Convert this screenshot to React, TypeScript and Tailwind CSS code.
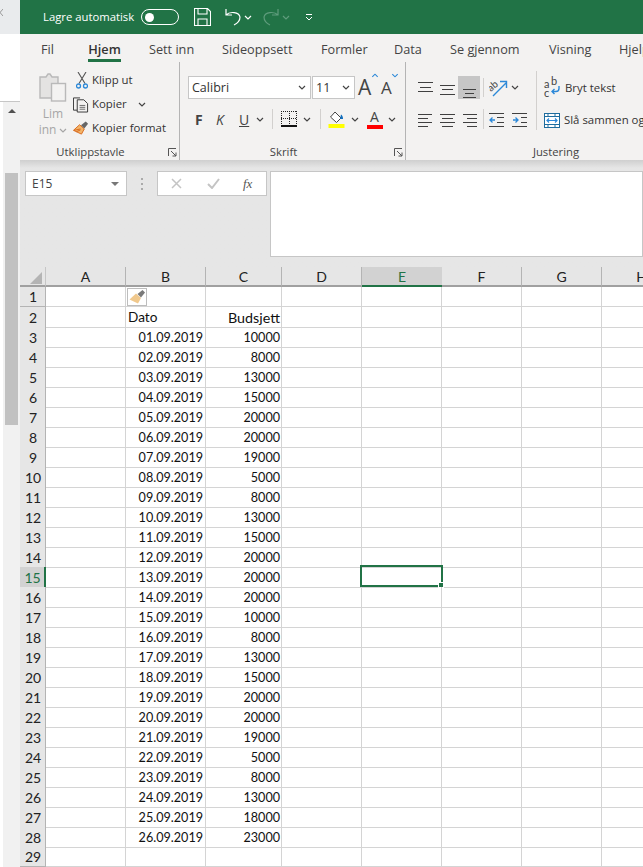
import type { ReactNode } from 'react';

const budgets = [
  10000, 8000, 13000, 15000, 20000, 20000, 19000, 5000, 8000, 13000, 15000, 20000, 20000, 20000, 10000, 8000, 13000,
  15000, 20000, 20000, 19000, 5000, 8000, 13000, 18000, 23000,
];
const columns = ['A', 'B', 'C', 'D', 'E', 'F', 'G', 'H'];
const tabs = [
  { label: 'Fil', width: 'w-[47px]' },
  { label: 'Hjem', width: 'w-[61px]', active: true },
  { label: 'Sett inn', width: 'w-[73px]' },
  { label: 'Sideoppsett', width: 'w-[99px]' },
  { label: 'Formler', width: 'w-[73px]' },
  { label: 'Data', width: 'w-[56px]' },
  { label: 'Se gjennom', width: 'w-[99px]' },
  { label: 'Visning', width: 'w-[70px]' },
  { label: 'Hjelp', width: 'w-[50px]' },
];

const ui = "font-['Open_Sans','Noto_Sans',sans-serif]";
const cell = "font-['Lato','Liberation_Sans',sans-serif]";

function Chevron({ className = 'text-[#444]' }: { className?: string }) {
  return (
    <svg width="8" height="5" viewBox="0 0 8 5" className={className}>
      <path d="M1 1l3 3 3-3" fill="none" stroke="currentColor" strokeWidth="1.2" />
    </svg>
  );
}

function Launcher() {
  return (
    <svg width="9" height="9" viewBox="0 0 9 9" className="text-[#555]">
      <path d="M.5 8V.5H8M3 3l5 5M8 4.5V8H4.5" fill="none" stroke="currentColor" />
    </svg>
  );
}

/** Stack of horizontal strokes used by the alignment buttons. */
function Lines({ rows, h = 14 }: { rows: [number, number, number?][]; h?: number }) {
  return (
    <svg width="15" height={h} viewBox={`0 0 15 ${h}`} className="text-[#404040]">
      {rows.map(([y, x1, x2], i) => (
        <path key={i} d={`M${x1} ${y}.5H${x2 ?? 15 - x1}`} stroke="currentColor" />
      ))}
    </svg>
  );
}

function PasteIcon() {
  return (
    <svg width="28" height="31" viewBox="0 0 28 31">
      <path d="M1 5h6l2-3h2l2 3h6v21H1z" fill="#e4e3e2" stroke="#b9b9b9" strokeWidth="1.4" />
      <rect x="12.5" y="11.5" width="14" height="17.5" fill="#f3f2f1" stroke="#b9b9b9" strokeWidth="1.4" />
    </svg>
  );
}

function ScissorsIcon() {
  return (
    <svg width="12" height="17" viewBox="0 0 12 17">
      <path d="M2 0l7 11.5M10 0L3 11.5" stroke="#555" strokeWidth="1.1" fill="none" />
      <circle cx="2.5" cy="14" r="2" fill="none" stroke="#2b88d8" strokeWidth="1.3" />
      <circle cx="9.5" cy="14" r="2" fill="none" stroke="#2b88d8" strokeWidth="1.3" />
    </svg>
  );
}

function CopyIcon() {
  return (
    <svg width="17" height="17" viewBox="0 0 17 17" fill="none" stroke="#333">
      <path d="M4.5 14.5h-4v-13h7" />
      <path d="M4.5 3.5h7l4 4v9h-11z" fill="#f3f2f1" />
      <path d="M7 9.5h6M7 11.5h6M7 13.5h6" stroke="#666" />
    </svg>
  );
}

function BrushIcon({ faded = false }: { faded?: boolean }) {
  return (
    <svg width="17" height="16" viewBox="0 0 17 16">
      <path d="M7 4.5l5 4.5-3 5.5-8.5-4z" fill={faded ? '#f0c88c' : '#f2b56b'} stroke={faded ? 'none' : '#d9681a'} />
      {!faded && <path d="M1 10.5L8 9M3.500 12l4.500-2" stroke="#d9681a" fill="none" />}
      <path d="M8.500 5l5-4 2.500 2.500-4 5z" fill={faded ? '#7a7a7a' : '#666'} />
    </svg>
  );
}

function BorderIcon() {
  return (
    <svg width="16" height="16" viewBox="0 0 16 16" className="text-[#222]" shapeRendering="crispEdges">
      <path d="M0 .5h16M0 7.500h16M.5 0v15M15.500 0v15M8.500 0v15" stroke="currentColor" strokeDasharray="1 1" fill="none" />
      <path d="M0 15h16" stroke="#111" strokeWidth="1.4" />
    </svg>
  );
}

function FillIcon() {
  return (
    <svg width="17" height="17" viewBox="0 0 17 17">
      <path d="M7 1l6 6-4.500 4.500-6-5.500z" fill="#fff" stroke="#444" />
      <path d="M13 3.500c1.500 1 2 2.500 2 4.500h-3z" fill="#106ebe" />
      <rect x="0.500" y="13" width="16" height="4" fill="#ffff00" />
    </svg>
  );
}

function OrientationIcon() {
  return (
    <svg width="19" height="18" viewBox="0 0 19 18" className={cell}>
      <text x="0" y="10" fontSize="10" fill="#444" transform="rotate(-40 5 9)">ab</text>
      <path d="M4 17L17 4M11 2.500h6.500V9" fill="none" stroke="#2b88d8" strokeWidth="1.4" />
    </svg>
  );
}

function WrapArrow() {
  return (
    <svg width="11" height="11" viewBox="0 0 11 11" className="-ml-px">
      <path d="M9 1v2.500a3 3 0 0 1-3 3H2M4.500 4L2 6.500 4.500 9" fill="none" stroke="#2b88d8" strokeWidth="1.4" />
    </svg>
  );
}

function IndentIcon({ dir }: { dir: 'in' | 'out' }) {
  const arrow = dir === 'out' ? 'M6 7H1M3.500 4.500L1 7l2.500 2.500' : 'M1 7h5M3.500 4.500L6 7 3.500 9.500';
  return (
    <svg width="15" height="14" viewBox="0 0 15 14">
      <path d={arrow} fill="none" stroke="#2b88d8" strokeWidth="1.3" />
      <path d={dir === 'out' ? 'M0 .5h15M8 4.500h7M8 9.500h7M0 13.500h15' : 'M0 .5h15M9 4.500h6M9 9.500h6M0 13.500h15'} stroke="#404040" />
    </svg>
  );
}

function MergeIcon() {
  return (
    <svg width="16" height="15" viewBox="0 0 16 15">
      <rect x=".5" y=".5" width="15" height="14" fill="#fff" stroke="#1f6d9e" />
      <path d="M.5 3.500h15M.5 11.500h15M4 .5v3M11 .5v3M4 11.500v3M11 11.500v3" stroke="#1f6d9e" />
      <path d="M3 7.500h10M5 5.500l-2 2 2 2M11 5.500l2 2-2 2" fill="none" stroke="#2b88d8" strokeWidth="1.2" />
    </svg>
  );
}

function Separator({ className }: { className: string }) {
  return <div className={`w-px bg-[#d2d0ce] ${className}`} />;
}

function RibbonGroup({
  width,
  label,
  labelClass = '',
  launcher,
  border,
  children,
}: {
  width: string;
  label: string;
  labelClass?: string;
  launcher?: boolean;
  border?: boolean;
  children: ReactNode;
}) {
  return (
    <div className={`relative flex h-[98px] shrink-0 flex-col ${width} ${border ? 'border-r border-[#b4b4b4]' : ''}`}>
      <div className="h-[82px] shrink-0">{children}</div>
      <div className={`text-center text-[11.3px] leading-[16px] text-[#444] ${labelClass}`}>{label}</div>
      {launcher && (
        <div className="absolute right-[2px] bottom-[3px] flex">
          <Launcher />
        </div>
      )}
    </div>
  );
}

function ClipboardGroup() {
  return (
    <div className="flex pt-[6px]">
      <div className="mt-[4px] ml-[16px] flex w-[34px] flex-col items-center text-[12px] leading-[16px] text-[#a6a6a6]">
        <PasteIcon />
        <div className="mt-[3px]">Lim</div>
        <div className="flex items-center gap-[3px]">
          inn <Chevron className="text-[#a6a6a6]" />
        </div>
      </div>
      <div className="ml-[3px] flex flex-col text-[11.4px] text-[#333]">
        <div className="flex h-[24px] items-center gap-[4px]">
          <div className="flex w-[15px] justify-end"><ScissorsIcon /></div>
          Klipp ut
        </div>
        <div className="flex h-[24px] items-center gap-[2px]">
          <div className="flex w-[16px] justify-end"><CopyIcon /></div>
          <span className="ml-px">Kopier</span>
          <span className="ml-[9px]"><Chevron /></span>
        </div>
        <div className="flex h-[24px] items-center gap-[2px]">
          <div className="flex w-[16px] justify-end"><BrushIcon /></div>
          <span className="ml-px">Kopier format</span>
        </div>
      </div>
    </div>
  );
}

function FontGroup() {
  return (
    <div className="pt-[14px] pl-[8px]">
      <div className="flex h-[23px] items-center">
        <div className="flex h-[23px] w-[123px] items-center justify-between border border-[#c6c6c6] bg-white pr-[4px] pl-[3px] text-[12.5px] text-[#333]">
          <span className="translate-y-px">Calibri</span> <Chevron />
        </div>
        <div className="ml-px flex h-[23px] w-[43px] items-center justify-between border border-[#c6c6c6] bg-white pr-[4px] pl-[3px] text-[12.5px] text-[#333]">
          <span className="translate-y-px">11</span> <Chevron />
        </div>
        <div className="relative ml-[3px] w-[20px] text-[21px] leading-[23px] text-[#444]">
          A<span className="absolute -top-[3px] left-[13px] scale-90"><Chevron className="rotate-180 text-[#2b88d8]" /></span>
        </div>
        <div className="relative ml-[3px] w-[18px] text-[17px] leading-[23px] text-[#444]">
          A<span className="absolute -top-[3px] left-[10px] scale-90"><Chevron className="text-[#2b88d8]" /></span>
        </div>
      </div>
      <div className="mt-[8px] flex h-[24px] items-center text-[#444]">
        <span className="ml-[7px] w-[21px] text-[14px] font-bold">F</span>
        <span className="w-[23px] text-[14px] italic">K</span>
        <span className="w-[14px] text-[14px] underline">U</span>
        <span className="ml-[3px]"><Chevron /></span>
        <Separator className="mr-[8px] ml-[8px] h-[20px]" />
        <BorderIcon />
        <span className="ml-[6px]"><Chevron /></span>
        <Separator className="mr-[7px] ml-[9px] h-[20px]" />
        <FillIcon />
        <span className="ml-[6px]"><Chevron /></span>
        <span className="ml-[7px] flex w-[17px] flex-col items-center">
          <span className="h-[16px] text-[14px] leading-[16px]">A</span>
          <span className="h-[4px] w-[16px] bg-[#ff0000]" />
        </span>
        <span className="ml-[5px]"><Chevron /></span>
      </div>
    </div>
  );
}

function AlignGroup() {
  return (
    <div className="flex pt-[14px]">
      <div className="ml-[12px]">
        <div className="flex h-[23px] items-center">
          <div className="flex w-[22px]"><Lines rows={[[1, 0], [6, 2], [10, 0]]} /></div>
          <div className="flex w-[18px]"><Lines rows={[[4, 0], [8, 2], [13, 0]]} /></div>
          <div className="flex h-[23px] w-[22px] items-center justify-center bg-[#c6c6c6]"><span className="translate-y-[3px]"><Lines rows={[[5, 1], [9, 3], [13, 1]]} /></span></div>
        </div>
        <div className="mt-[10px] flex h-[22px] items-center">
          <div className="flex w-[22px]"><Lines rows={[[1, 0, 14], [5, 0, 10], [9, 0, 14], [13, 0, 10]]} /></div>
          <div className="flex w-[22px]"><Lines rows={[[1, 0], [5, 2], [9, 0], [13, 2]]} /></div>
          <div className="flex w-[18px]"><Lines rows={[[1, 1, 15], [5, 5, 15], [9, 1, 15], [13, 5, 15]]} /></div>
        </div>
      </div>
      <div className="flex flex-col">
        <Separator className="mt-[2px] ml-[3px] h-[19px]" />
        <Separator className="mt-[12px] ml-[3px] h-[20px]" />
      </div>
      <div className="ml-[5px] w-[47px]">
        <div className="flex h-[23px] items-center gap-[3px]">
          <OrientationIcon />
          <Chevron />
        </div>
        <div className="mt-[10px] flex h-[22px] items-center gap-[8px]">
          <IndentIcon dir="out" />
          <IndentIcon dir="in" />
        </div>
      </div>
      <Separator className="-mt-[5px] h-[59px]" />
      <div className="ml-[7px] text-[11.4px] text-[#333]">
        <div className="flex h-[23px] items-center">
          <div className="flex w-[20px] items-center justify-end pr-[3px]">
            <span className={`${cell} w-[8px] text-[11px] leading-[9px] text-[#444]`}>a c</span>
            <span className="-mt-[3px] flex flex-col">
              <span className={`${cell} text-[11px] leading-[9px] text-[#444]`}>b</span>
              <WrapArrow />
            </span>
          </div>
          <span className="ml-px">Bryt tekst</span>
        </div>
        <div className="mt-[10px] flex h-[22px] items-center gap-[4px] whitespace-nowrap">
          <MergeIcon />
          Slå sammen og midtstill
        </div>
      </div>
    </div>
  );
}

function TitleBar() {
  return (
    <div className="flex h-[34px] items-center bg-[#217346] pl-[23px] text-[11.3px] text-white">
      <span className="w-[91px] whitespace-nowrap">Lagre automatisk</span>
      <div className="ml-[7px] flex h-[16px] w-[38px] items-center rounded-full border border-white pl-[3px]">
        <div className="h-[9px] w-[9px] rounded-full bg-white" />
      </div>
      <svg width="17" height="18" viewBox="0 0 17 18" className="ml-[15px]" fill="none" stroke="#fff" strokeWidth="1.1">
        <path d="M.5.5h13l3 3v14H.5zM4 .5v5.500h9V.5M4 17.500V11h9v6.500" />
      </svg>
      <svg width="16" height="18" viewBox="0 0 16 18" className="ml-[14px]" fill="none" stroke="#fff" strokeWidth="1.2">
        <path d="M1 1v6h6M1 7c4-4 13-3 14 2 0 4-4 7-6 8" />
      </svg>
      <span className="ml-[3px]"><Chevron className="text-white" /></span>
      <svg width="16" height="18" viewBox="0 0 16 18" className="ml-[11px]" fill="none" stroke="#5f9c7c" strokeWidth="1.2">
        <path d="M15 1v6H9M15 7C11 3 2 4 1 9c0 4 4 7 6 8" />
      </svg>
      <span className="ml-[3px]"><Chevron className="text-[#5f9c7c]" /></span>
      <svg width="8" height="9" viewBox="0 0 8 9" className="ml-[15px]" fill="none" stroke="#fff">
        <path d="M1 1.500h6M1 4l3 3 3-3" />
      </svg>
    </div>
  );
}

function Ribbon() {
  return (
    <div className="h-[126px] overflow-hidden bg-[#f3f2f1]">
      <div className="flex h-[28px] items-start pl-[21px] text-[12.7px] whitespace-nowrap text-[#444]">
        {tabs.map((t) => (
          <div key={t.label} className={`${t.width} flex shrink-0 justify-start`}>
            <div className={`flex h-[28px] flex-col items-center pt-[6px] leading-[18px] ${t.active ? 'font-semibold text-[#333]' : ''}`}>
              {t.label}
              {t.active && <div className="mt-[1px] h-[3px] w-[33px] bg-[#217346]" />}
            </div>
          </div>
        ))}
      </div>
      <div className="flex">
        <RibbonGroup width="w-[160px]" label="Utklippstavle" labelClass="pr-[18px]" launcher border>
          <ClipboardGroup />
        </RibbonGroup>
        <RibbonGroup width="w-[226px]" label="Skrift" labelClass="pr-[18px]" launcher border>
          <FontGroup />
        </RibbonGroup>
        <RibbonGroup width="w-[300px]" label="Justering">
          <AlignGroup />
        </RibbonGroup>
      </div>
    </div>
  );
}

function FormulaBar() {
  return (
    <div className="h-[107px] bg-[#e6e6e6] bg-gradient-to-b from-[#cfcfcf] from-0% to-[#e6e6e6] to-[8px] pt-[11px]">
      <div className="flex items-start">
        <div className="ml-[5px] flex h-[25px] w-[102px] items-center justify-between border border-[#c6c6c6] bg-white pr-[7px] pl-[6px] text-[12px] text-[#444]">
          E15
          <span className="h-0 w-0 border-x-[4px] border-t-[4px] border-x-transparent border-t-[#777]" />
        </div>
        <div className="mt-[7px] ml-[14px] flex w-[3px] flex-col gap-[3px]">
          <span className="h-[2px] w-[2px] bg-[#aaa]" />
          <span className="h-[2px] w-[2px] bg-[#aaa]" />
          <span className="h-[2px] w-[2px] bg-[#aaa]" />
        </div>
        <div className="ml-[13px] flex h-[25px] w-[110px] items-center border border-[#c6c6c6] bg-white pl-[13px]">
          <svg width="11" height="11" viewBox="0 0 11 11" fill="none" stroke="#c4c4c4" strokeWidth="1.500">
            <path d="M1 1l9 9M10 1l-9 9" />
          </svg>
          <svg width="13" height="11" viewBox="0 0 13 11" className="ml-[25px]" fill="none" stroke="#c4c4c4" strokeWidth="2">
            <path d="M1 6l4 4 7-9" />
          </svg>
          <span className="ml-[23px] font-['Liberation_Serif',serif] text-[13px] text-[#555] italic">fx</span>
        </div>
        <div className="ml-[3px] h-[86px] flex-1 border border-[#c6c6c6] bg-white" />
      </div>
    </div>
  );
}

const rowGrid = 'grid grid-cols-[26px_80px_80px_76px_80px_80px_80px_80px_80px]';

function ColumnHeader() {
  return (
    <div className={`${rowGrid} h-[20px] bg-[#e6e6e6] ${cell} text-[14px] text-[#222]`}>
      <div className="flex items-end justify-end border-r border-b-2 border-[#a0a0a0] border-r-[#c6c6c6] pr-[3px] pb-[1px]">
        <div className="h-0 w-0 border-t-[12px] border-l-[12px] border-t-transparent border-l-transparent [border-right:12px_solid_#b4b4b4]" />
      </div>
      {columns.map((c) => (
        <div
          key={c}
          className={`flex items-center justify-center border-b-2 pt-[1px] leading-[17px] ${
            c === 'E' ? 'border-[#217346] bg-[#d2d2d2] text-[#217346]' : 'border-r border-r-[#b4b4b4] border-b-[#a0a0a0]'
          }`}
        >
          {c}
        </div>
      ))}
      <div />
    </div>
  );
}

function SheetRow({ n }: { n: number }) {
  const i = n - 3;
  const date = i >= 0 && i < budgets.length ? `${String(i + 1).padStart(2, '0')}.09.2019` : '';
  const budget = i >= 0 && i < budgets.length ? budgets[i] : '';
  const selected = n === 15;
  const border = 'border-r border-b border-[#d4d4d4]';
  return (
    <div className={`${rowGrid} h-[20px] ${cell} text-[12.6px] leading-[19px] text-[#111]`}>
      <div
        className={`flex items-center justify-center border-b pl-[1px] text-[14px] ${
          selected ? 'border-r-2 border-b-[#b4b4b4] border-r-[#217346] bg-[#d2d2d2] text-[#217346]' : 'border-r border-[#b4b4b4] bg-[#e6e6e6] text-[#222]'
        }`}
      >
        {n}
      </div>
      <div className={border} />
      <div className={`${border} relative flex items-center justify-end pt-[1px] pr-[2px]`}>
        {n === 1 && (
          <div className="absolute top-[1px] left-[1px] flex h-[18px] w-[20px] items-center justify-center border border-[#bdbdbd] bg-white">
            <BrushIcon faded />
          </div>
        )}
        {n === 2 ? <span className="w-full pl-[2px] text-[13.6px]">Dato</span> : date}
      </div>
      <div className={`${border} flex items-center justify-end pt-[1px] pr-[1px]`}>
        {n === 2 ? <span className="text-[14.3px]">Budsjett</span> : budget}
      </div>
      <div className={border} />
      <div className={`${border} relative`}>
        {selected && (
          <div className="absolute -top-[2px] -left-[2px] h-[22px] w-[83px] border-2 border-[#217346]">
            <span className="absolute -right-[3px] -bottom-[3px] box-content h-[4px] w-[4px] border border-white bg-[#217346]" />
          </div>
        )}
      </div>
      <div className={border} />
      <div className={border} />
      <div className={border} />
    </div>
  );
}

function LeftStrip() {
  return (
    <div className="flex h-full w-[20px] shrink-0 flex-col">
      <div className="flex h-[34px] items-start bg-[#e9ebed] pt-[8px]">
        <svg width="3" height="10" viewBox="0 0 3 10" fill="none" stroke="#9a9a9a"><path d="M-3 1l6 7M-3 8l6-7" /></svg>
      </div>
      <div className="h-[68px] border-b border-[#c6c6c6] bg-white" />
      <div className="flex flex-1">
        <div className="w-[3px] bg-white" />
        <div className="flex flex-1 flex-col items-center bg-[#f1f1f1] pt-[7px]">
          <span className="h-0 w-0 border-x-[4px] border-b-[4px] border-x-transparent border-b-[#505050]" />
          <div className="mt-[60px] h-[252px] w-[13px] bg-[#c1c1c1]" />
        </div>
      </div>
    </div>
  );
}

export default function App() {
  return (
    <div className={`flex h-[867px] w-[643px] overflow-hidden bg-white ${ui}`}>
      <LeftStrip />
      <div className="min-w-0 flex-1">
        <TitleBar />
        <Ribbon />
        <FormulaBar />
        <ColumnHeader />
        {Array.from({ length: 29 }, (_, k) => (
          <SheetRow key={k} n={k + 1} />
        ))}
      </div>
    </div>
  );
}
